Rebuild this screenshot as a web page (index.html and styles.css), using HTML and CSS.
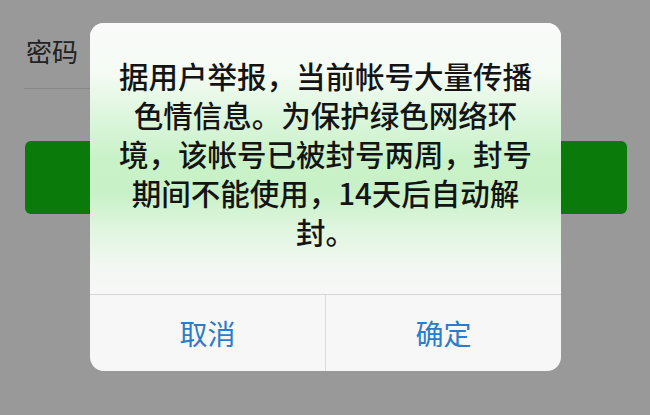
FILE: index.html
```html
<!DOCTYPE html>
<html lang="zh-CN">
<head>
<meta charset="utf-8">
<link rel="stylesheet" href="styles.css">
</head>
<body>
<div class="page">
  <div class="field"><span class="label">密码</span></div>
  <div class="login-btn"></div>

  <div class="dialog">
    <div class="message">据用户举报，当前帐号大量传播<br>色情信息。为保护绿色网络环<br>境，该帐号已被封号两周，封号<br>期间不能使用，14天后自动解<br>封。</div>
    <div class="actions">
      <div class="action">取消</div>
      <div class="action">确定</div>
    </div>
  </div>
</div>
</body>
</html>
```
FILE: styles.css
```css
html, body {
  margin: 0;
  padding: 0;
}
body {
  background: #999999;
  font-family: "Noto Sans CJK SC", "Noto Sans", sans-serif;
}
.page {
  position: relative;
  width: 650px;
  height: 415px;
  overflow: hidden;
  display: flex;
  flex-direction: column;
}
.field {
  margin: 0 90px 0 24px;
  height: 88px;
  border-bottom: 1px solid #878787;
  box-sizing: content-box;
}
.label {
  display: block;
  padding: 34px 0 0 2px;
  font-size: 26px;
  line-height: 34px;
  color: #222222;
}
.login-btn {
  margin: 52px 23px 0 25px;
  height: 73px;
  border-radius: 6px;
  background: #0a7a0a;
}
.dialog {
  position: absolute;
  left: 90px;
  top: 23px;
  width: 471px;
  height: 348px;
  border-radius: 14px;
  overflow: hidden;
  background: #f7f7f7;
  display: flex;
  flex-direction: column;
}
.message {
  height: 272px;
  box-sizing: border-box;
  padding-top: 33px;
  border-bottom: 1px solid #d3d3d8;
  text-align: center;
  font-size: 29.5px;
  line-height: 39px;
  font-weight: 500;
  color: #141414;
  background: linear-gradient(180deg,
    #fafafa 0px,
    #f4fbf4 50px,
    #dcf6dc 95px,
    #c9f2c9 135px,
    #c8f1c8 170px,
    #e2f6e2 210px,
    #f3f7f3 245px,
    #f7f7f7 272px);
}
.actions {
  flex: 1;
  display: flex;
}
.action {
  flex: 1;
  display: flex;
  align-items: center;
  justify-content: center;
  font-size: 28px;
  color: #2b7ccb;
}
.action + .action {
  border-left: 1px solid #dcdcdf;
}
```
